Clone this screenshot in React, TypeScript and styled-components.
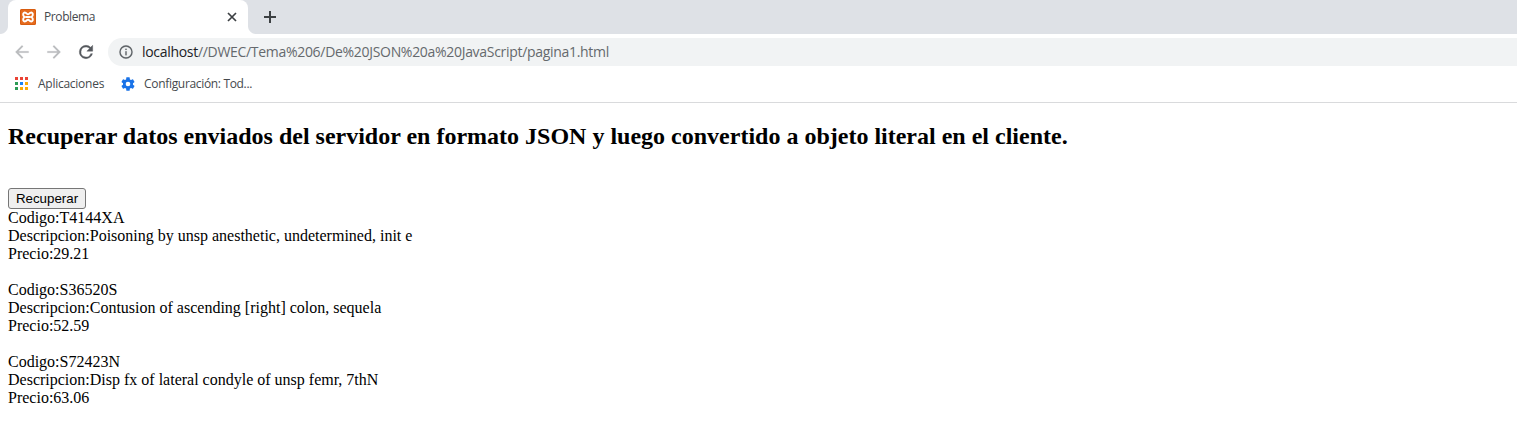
import React from "react";
import styled, { createGlobalStyle } from "styled-components";

const GlobalStyle = createGlobalStyle`
  * { box-sizing: border-box; }
  html, body { margin: 0; background: #fff; overflow: hidden; }
`;

const Window = styled.div`
  width: 100%;
  height: 421px;
  overflow: hidden;
  display: flex;
  flex-direction: column;
  background: #fff;
  font-family: "Open Sans", "Noto Sans", sans-serif;
`;

const TabStrip = styled.div`
  height: 34px;
  flex: none;
  display: flex;
  align-items: stretch;
  background: #dee1e6;
`;

const TabFoot = styled.div<{ $side: "left" | "right" }>`
  width: 8px;
  background: radial-gradient(
    circle at ${(p) => (p.$side === "left" ? "0" : "8px")} 26px,
    #dee1e6 7.5px,
    #fff 8.5px
  ) 0 0 / 8px 34px no-repeat;
  clip-path: inset(26px 0 0 0);
`;

const Tab = styled.div`
  width: 240px;
  display: flex;
  align-items: center;
  padding: 0 10px 0 12px;
  background: #fff;
  border-radius: 8px 8px 0 0;
`;

const TabTitle = styled.span`
  flex: 1;
  margin-left: 8px;
  font-size: 12px;
  line-height: 16px;
  letter-spacing: -0.4px;
  color: #45494d;
`;

const IconButton = styled.button<{ $size: number }>`
  display: flex;
  align-items: center;
  justify-content: center;
  flex: none;
  width: ${(p) => p.$size}px;
  height: ${(p) => p.$size}px;
  padding: 0;
  border: 0;
  background: none;
`;

const NewTab = styled(IconButton)`
  align-self: center;
  margin-left: 4px;
`;

const Toolbar = styled.div`
  height: 36px;
  flex: none;
  display: flex;
  align-items: center;
`;

const NavButtons = styled.div`
  width: 108px;
  display: flex;
  gap: 12px;
  padding-left: 12px;
`;

const AddressBar = styled.div`
  flex: 1;
  height: 28px;
  display: flex;
  align-items: center;
  gap: 8px;
  padding-left: 10px;
  background: #f1f3f4;
  border-radius: 14px 0 0 14px;
`;

const Address = styled.span`
  font-size: 14px;
  line-height: 20px;
  letter-spacing: -0.305px;
  white-space: nowrap;
  color: #65696d;
`;

const Host = styled.span`
  color: #202124;
`;

const Bookmarks = styled.div`
  height: 33px;
  flex: none;
  display: flex;
  padding: 0 0 4px 13px;
  align-items: center;
  gap: 16px;
  border-bottom: 1px solid #d9dadc;
`;

const Bookmark = styled.div<{ $gap: number; $tracking: number }>`
  display: flex;
  align-items: center;
  gap: ${(p) => p.$gap}px;
  font-size: 12px;
  line-height: 16px;
  letter-spacing: ${(p) => p.$tracking}px;
  white-space: nowrap;
  color: #45494d;
`;

const Page = styled.main`
  padding: 0 8px;
  font-family: "Liberation Serif", "Times New Roman", serif;
  font-size: 16px;
  line-height: 18px;
  color: #000;
`;

const Heading = styled.h2`
  margin: 20px 0 38px;
  font-size: 24px;
  line-height: 27px;
  white-space: nowrap;
`;

const RecoverButton = styled.button`
  display: block;
  width: 78px;
  height: 21px;
  padding: 0;
  border: 1px solid #767676;
  border-radius: 3px;
  background: #efefef;
  color: #000;
  font-family: "Liberation Sans", Arial, sans-serif;
  font-size: 13.333px;
  line-height: 19px;
`;

const Item = styled.div`
  margin-bottom: 18px;
`;

const ServerIcon = () => (
  <svg width="16" height="16" viewBox="0 0 16 16">
    <rect width="16" height="16" rx="1.6" fill="#e56b1e" />
    <rect x="0.5" y="0.5" width="15" height="15" rx="1.3" fill="none" stroke="#d75c10" />
    <path
      d="M5.2 3.6C2.8 3.2 2.4 6.5 4.5 8C2.4 9.5 2.8 12.8 5.2 12.4C6.5 12.2 6.5 10.8 8 10.8S9.5 12.2 10.8 12.4C13.2 12.8 13.6 9.5 11.5 8C13.6 6.5 13.2 3.2 10.8 3.6C9.5 3.8 9.5 5.2 8 5.2S6.5 3.8 5.2 3.6ZM5.6 8H10.4"
      fill="none"
      stroke="#fff"
      strokeWidth="1.9"
    />
  </svg>
);

type GlyphProps = { d: string; size?: number; color?: string; weight?: number };

const Glyph = ({ d, size = 20, color = "#5f6368", weight = 0 }: GlyphProps) => (
  <svg width={size} height={size} viewBox="0 0 24 24" fill={color} stroke={color} strokeWidth={weight}>
    <path d={d} />
  </svg>
);

const BACK = "M20 11H7.83l5.59-5.59L12 4l-8 8 8 8 1.41-1.41L7.83 13H20v-2z";
const FORWARD = "M12 4l-1.41 1.41L16.17 11H4v2h12.17l-5.58 5.59L12 20l8-8z";
const RELOAD =
  "M17.65 6.35A7.96 7.96 0 0 0 12 4a8 8 0 1 0 7.73 10h-2.08A6 6 0 1 1 12 6c1.66 0 3.14.69 4.22 1.78L13 11h7V4l-2.35 2.35z";
const INFO =
  "M11 17h2v-6h-2v6zm0-8h2V7h-2v2zm1-7a10 10 0 1 0 0 20 10 10 0 0 0 0-20zm0 18a8 8 0 1 1 0-16 8 8 0 0 1 0 16z";
const GEAR =
  "M19.43 12.98c.04-.32.07-.64.07-.98s-.03-.66-.07-.98l2.11-1.65c.19-.15.24-.42.12-.64l-2-3.46c-.12-.22-.39-.3-.61-.22l-2.49 1c-.52-.4-1.08-.73-1.69-.98l-.38-2.65A.49.49 0 0 0 14 2h-4c-.25 0-.46.18-.49.42l-.38 2.65c-.61.25-1.17.59-1.69.98l-2.49-1c-.23-.09-.49 0-.61.22l-2 3.46c-.13.22-.07.49.12.64l2.11 1.65c-.04.32-.07.65-.07.98s.03.66.07.98l-2.11 1.65c-.19.15-.24.42-.12.64l2 3.46c.12.22.39.3.61.22l2.49-1c.52.4 1.08.73 1.69.98l.38 2.65c.03.24.24.42.49.42h4c.25 0 .46-.18.49-.42l.38-2.65c.61-.25 1.17-.59 1.69-.98l2.49 1c.23.09.49 0 .61-.22l2-3.46c.12-.22.07-.49-.12-.64l-2.11-1.65zM12 15.5a3.5 3.5 0 1 1 0-7 3.5 3.5 0 0 1 0 7z";

const APP_COLORS = [
  "#ea4335", "#ea4335", "#ea4335",
  "#2c9b55", "#1a84f5", "#fbab05",
  "#2c9b55", "#fbab05", "#fbab05",
];

const AppsIcon = () => (
  <svg width="16" height="16" viewBox="0 0 16 16" shapeRendering="crispEdges">
    {APP_COLORS.map((fill, i) => (
      <rect key={i} x={2 + (i % 3) * 5} y={1 + Math.floor(i / 3) * 5} width="3" height="3" fill={fill} />
    ))}
  </svg>
);

const ITEMS = [
  { codigo: "T4144XA", descripcion: "Poisoning by unsp anesthetic, undetermined, init e", precio: "29.21" },
  { codigo: "S36520S", descripcion: "Contusion of ascending [right] colon, sequela", precio: "52.59" },
  { codigo: "S72423N", descripcion: "Disp fx of lateral condyle of unsp femr, 7thN", precio: "63.06" },
];

export default function App() {
  return (
    <Window>
      <GlobalStyle />
      <TabStrip>
        <TabFoot $side="left" />
        <Tab>
          <ServerIcon />
          <TabTitle>Problema</TabTitle>
          <IconButton $size={12} aria-label="Cerrar">
            <svg width="12" height="12" viewBox="0 0 12 12" stroke="#3c4043" strokeWidth="1.7">
              <path d="M2 2l8 8M10 2l-8 8" />
            </svg>
          </IconButton>
        </Tab>
        <TabFoot $side="right" />
        <NewTab $size={20} aria-label="Nueva">
          <svg width="14" height="14" viewBox="0 0 14 14" stroke="#3c4043" strokeWidth="2">
            <path d="M7 1v12M1 7h12" />
          </svg>
        </NewTab>
      </TabStrip>
      <Toolbar>
        <NavButtons>
          <IconButton $size={20} aria-label="Atrás"><Glyph d={BACK} color="#babcbe" weight={0.2} /></IconButton>
          <IconButton $size={20} aria-label="Adelante"><Glyph d={FORWARD} color="#babcbe" weight={0.2} /></IconButton>
          <IconButton $size={20} aria-label="Recargar"><Glyph d={RELOAD} color="#54585d" weight={0.5} /></IconButton>
        </NavButtons>
        <AddressBar>
          <Glyph d={INFO} size={16} weight={0.2} />
          <Address>
            <Host>localhost</Host>//DWEC/Tema%206/De%20JSON%20a%20JavaScript/pagina1.html
          </Address>
        </AddressBar>
      </Toolbar>
      <Bookmarks>
        <Bookmark $gap={9} $tracking={-0.26}>
          <AppsIcon />
          Aplicaciones
        </Bookmark>
        <Bookmark $gap={8} $tracking={-0.33}>
          <Glyph d={GEAR} size={16} color="#1a73e8" />
          Configuración: Tod...
        </Bookmark>
      </Bookmarks>
      <Page>
        <Heading>
          Recuperar datos enviados del servidor en formato JSON y luego convertido a objeto literal en el cliente.
        </Heading>
        <RecoverButton>Recuperar</RecoverButton>
        {ITEMS.map((item) => (
          <Item key={item.codigo}>
            <div>Codigo:{item.codigo}</div>
            <div>Descripcion:{item.descripcion}</div>
            <div>Precio:{item.precio}</div>
          </Item>
        ))}
      </Page>
    </Window>
  );
}
